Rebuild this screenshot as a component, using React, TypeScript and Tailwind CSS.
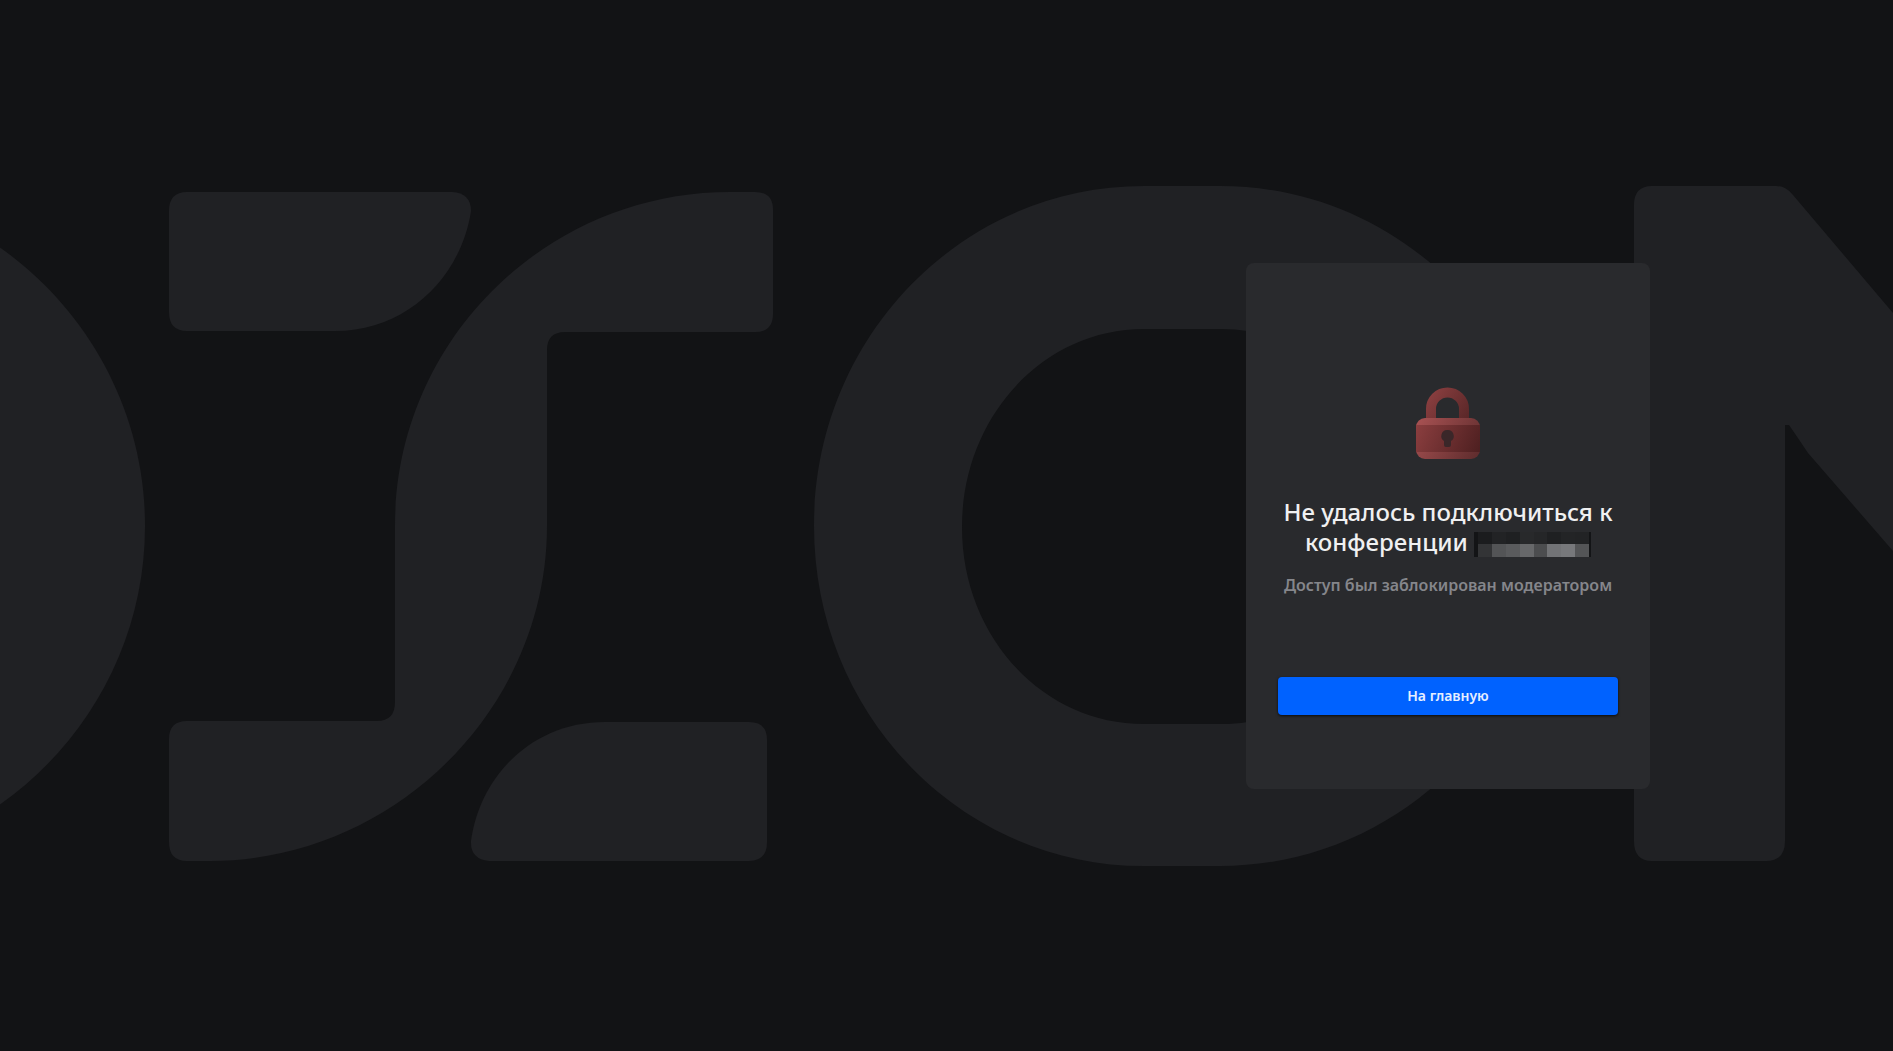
function Backdrop() {
  return (
    <svg
      className="absolute inset-0 h-full w-full"
      viewBox="0 0 1893 1051"
      preserveAspectRatio="xMidYMid slice"
      fill="#202124"
      aria-hidden="true"
    >
      <path d="M-192 186C-9 186 145 338 145 526S-9 866 -192 866Z" />
      <path d="M187 192H452Q471 193 471 211C461 277 407 331 335 331H187Q169 331 169 312V211Q169 192 187 192Z" />
      <path d="M730 192H755Q773 192 773 210V314Q773 332 755 332H565Q547 332 547 350V526C547 711 391 861 210 861H187Q169 861 169 842V739Q169 721 187 721H377Q395 721 395 702V526C395 341 546 192 730 192Z" />
      <path d="M605 722H749Q767 722 767 740V842Q767 861 749 861H489Q470 859 471 841C480 775 533 722 605 722Z" />
      <path
        fillRule="evenodd"
        d="M1144 186H1220C1403 186 1552 338 1552 526S1403 866 1220 866H1144C961 866 814 714 814 526S961 186 1144 186ZM1144 329C1043 329 962 417 962 527S1043 724 1144 724H1222C1321 724 1401 635 1401 527S1321 329 1222 329Z"
      />
      <path d="M1652 186H1776Q1786 186 1793 195L1893 313V551L1808 453Q1798 438 1789 425H1785V841Q1785 861 1766 861H1652Q1634 861 1634 841V205Q1634 186 1652 186Z" />
    </svg>
  )
}

function LockIcon() {
  return (
    <svg className="h-18 w-16" viewBox="0 0 64 72" aria-hidden="true">
      <defs>
        <linearGradient id="shackle" x1="10" y1="0" x2="56" y2="32" gradientUnits="userSpaceOnUse">
          <stop stopColor="#914243" />
          <stop offset="1" stopColor="#562526" />
        </linearGradient>
        <linearGradient id="rim" x1="0" y1="32" x2="64" y2="72" gradientUnits="userSpaceOnUse">
          <stop stopColor="#a95253" />
          <stop offset="1" stopColor="#5c2b2c" />
        </linearGradient>
        <linearGradient id="body" x1="0" y1="38" x2="64" y2="66" gradientUnits="userSpaceOnUse">
          <stop stopColor="#8b3e3f" />
          <stop offset="1" stopColor="#4d1f20" />
        </linearGradient>
      </defs>
      <path d="M15 32V22a16.5 16.5 0 0 1 33 0V32" fill="none" stroke="url(#shackle)" strokeWidth="10" />
      <rect y="31" width="64" height="41" rx="9" fill="url(#rim)" />
      <path d="M0 38H64V65H0Z" fill="url(#body)" />
      <path d="M31 43a6 6 0 0 0-3 11v4q0 2 2 2h3q2 0 2-2v-4a6 6 0 0 0-4-11Z" fill="#3a2729" />
    </svg>
  )
}

// Pixelated conference name
function HiddenName() {
  return (
    <span className="inline-flex h-[25px] w-[117px] flex-col border-l-4 border-r-2 border-[#131416] align-middle">
      <span className="flex h-3">
        <span className="flex-1 bg-[#1b1c1e]" />
        <span className="flex-1 bg-[#222325]" />
        <span className="flex-1 bg-[#1f2022]" />
        <span className="flex-1 bg-[#28292b]" />
        <span className="flex-1 bg-[#252628]" />
        <span className="flex-1 bg-[#1f2022]" />
        <span className="flex-1 bg-[#232426]" />
        <span className="flex-1 bg-[#222325]" />
      </span>
      <span className="flex flex-1">
        <span className="flex-1 bg-[#333436]" />
        <span className="flex-1 bg-[#535456]" />
        <span className="flex-1 bg-[#5a5b5d]" />
        <span className="flex-1 bg-[#67686a]" />
        <span className="flex-1 bg-[#4c4d4f]" />
        <span className="flex-1 bg-[#727376]" />
        <span className="flex-1 bg-[#77787b]" />
        <span className="flex-1 bg-[#545557]" />
      </span>
    </span>
  )
}

export default function App() {
  return (
    <main className="relative flex min-h-screen items-center justify-end overflow-hidden bg-[#121315] pr-[243px] font-['Noto_Sans','Open_Sans',sans-serif]">
      <Backdrop />
      <section className="relative flex min-h-[526px] w-[404px] flex-col items-center rounded-lg bg-[#292a2d] px-8 pt-[124px] pb-[74px]">
        <LockIcon />
        <h1 className="mt-[38px] text-center text-2xl leading-[30px] font-medium text-[#f0f0f1]">
          Не удалось подключиться к конференции <HiddenName />
        </h1>
        <p className="mt-4 text-center text-base font-semibold text-[#85868b]">
          Доступ был заблокирован модератором
        </p>
        <button
          type="button"
          className="mt-auto h-[38px] w-full rounded bg-[#0062ff] text-sm font-semibold text-[#e6efff] shadow-sm shadow-black/60"
        >
          На главную
        </button>
      </section>
    </main>
  )
}
